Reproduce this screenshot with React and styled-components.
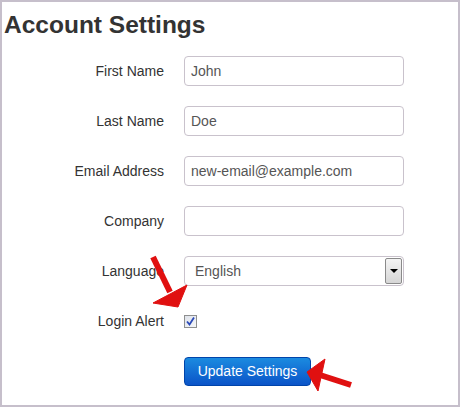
import React from 'react';
import styled, { createGlobalStyle } from 'styled-components';

const GlobalStyle = createGlobalStyle`
  html, body {
    margin: 0;
    padding: 0;
    background: #fff;
  }
`;

// --- Layout ---
const Page = styled.div`
  position: relative;
  box-sizing: border-box;
  width: 460px;
  height: 407px;
  border: 2px solid #c6bfcb;
  background: #fff;
  font-family: Arial, "Liberation Sans", Helvetica, sans-serif;
  color: #333;
  overflow: hidden;
`;

const Title = styled.h1`
  margin: 0;
  padding: 8px 0 0 2px;
  height: 44px;
  box-sizing: border-box;
  font-size: 24.5px;
  font-weight: bold;
  line-height: 30px;
  color: #333;
`;

const Form = styled.form`
  display: grid;
  grid-template-columns: 162px 220px;
  grid-auto-rows: 50px;
  column-gap: 20px;
  align-items: center;
`;

const Label = styled.label`
  text-align: right;
  font-size: 14px;
  color: #333;
`;

const Input = styled.input`
  box-sizing: border-box;
  width: 220px;
  height: 30px;
  padding: 0 6px;
  border: 1px solid #c9c2cc;
  border-radius: 4px;
  font-family: Arial, "Liberation Sans", Helvetica, sans-serif;
  font-size: 14px;
  color: #555;
  background: #fff;
  outline: none;
`;

const FakeSelect = styled.div`
  box-sizing: border-box;
  width: 220px;
  height: 30px;
  display: flex;
  align-items: stretch;
  border: 1px solid #c9c2cc;
  border-radius: 4px;
  background: #fff;
`;

const SelectValue = styled.span`
  flex: 1;
  display: flex;
  align-items: center;
  padding-left: 10px;
  font-size: 14px;
  color: #555;
`;

const SelectButton = styled.span`
  width: 15px;
  margin: 1px 1px 1px 0;
  display: flex;
  align-items: center;
  justify-content: center;
  border: 1px solid #8a8a8a;
  border-radius: 2px;
  background: linear-gradient(#f4f4f4, #d6d6d6);
`;

const Triangle = styled.span`
  width: 0;
  height: 0;
  border-left: 4px solid transparent;
  border-right: 4px solid transparent;
  border-top: 4px solid #000;
`;

const CheckBox = styled.span`
  box-sizing: border-box;
  width: 13px;
  height: 13px;
  display: flex;
  align-items: center;
  justify-content: center;
  border: 1px solid #8e8f8f;
  background: linear-gradient(135deg, #dfe3ea, #f4f6f9);
`;

const Button = styled.button`
  box-sizing: border-box;
  width: 127px;
  height: 29px;
  padding: 0;
  border: 1px solid #0044aa;
  border-radius: 4px;
  background: linear-gradient(#1b8be0, #0b54c8);
  color: #fff;
  font-family: Arial, "Liberation Sans", Helvetica, sans-serif;
  font-size: 14px;
  cursor: pointer;
`;

const Arrows = styled.svg`
  position: absolute;
  left: -2px;
  top: -2px;
  pointer-events: none;
`;

const fields = [
  { label: 'First Name', value: 'John' },
  { label: 'Last Name', value: 'Doe' },
  { label: 'Email Address', value: 'new-email@example.com' },
  { label: 'Company', value: '' },
];

const App = () => (
  <>
    <GlobalStyle />
    <Page>
      <Title>Account Settings</Title>
      <Form onSubmit={(e) => e.preventDefault()}>
        {fields.map((f) => (
          <React.Fragment key={f.label}>
            <Label>{f.label}</Label>
            <Input type="text" defaultValue={f.value} />
          </React.Fragment>
        ))}
        <Label>Language</Label>
        <FakeSelect>
          <SelectValue>English</SelectValue>
          <SelectButton>
            <Triangle />
          </SelectButton>
        </FakeSelect>
        <Label>Login Alert</Label>
        <div>
          <CheckBox>
            <svg width="9" height="9" viewBox="0 0 9 9">
              <path d="M1 4.5 L3.5 7.5 L8 0.5" fill="none" stroke="#2a49b8" strokeWidth="1.8" />
            </svg>
          </CheckBox>
        </div>
        <span />
        <div>
          <Button type="submit">Update Settings</Button>
        </div>
      </Form>
      <Arrows width="460" height="407" viewBox="0 0 460 407">
        <g fill="#e01010" stroke="#e01010" strokeLinejoin="round">
          <line x1="153" y1="257" x2="170" y2="292" strokeWidth="6" />
          <polygon points="178,307 153,303 187,285" strokeWidth="1" />
          <line x1="351" y1="385" x2="320" y2="375" strokeWidth="6" />
          <polygon points="307,372 325,359 318,391" strokeWidth="1" />
        </g>
      </Arrows>
    </Page>
  </>
);

export default App;
